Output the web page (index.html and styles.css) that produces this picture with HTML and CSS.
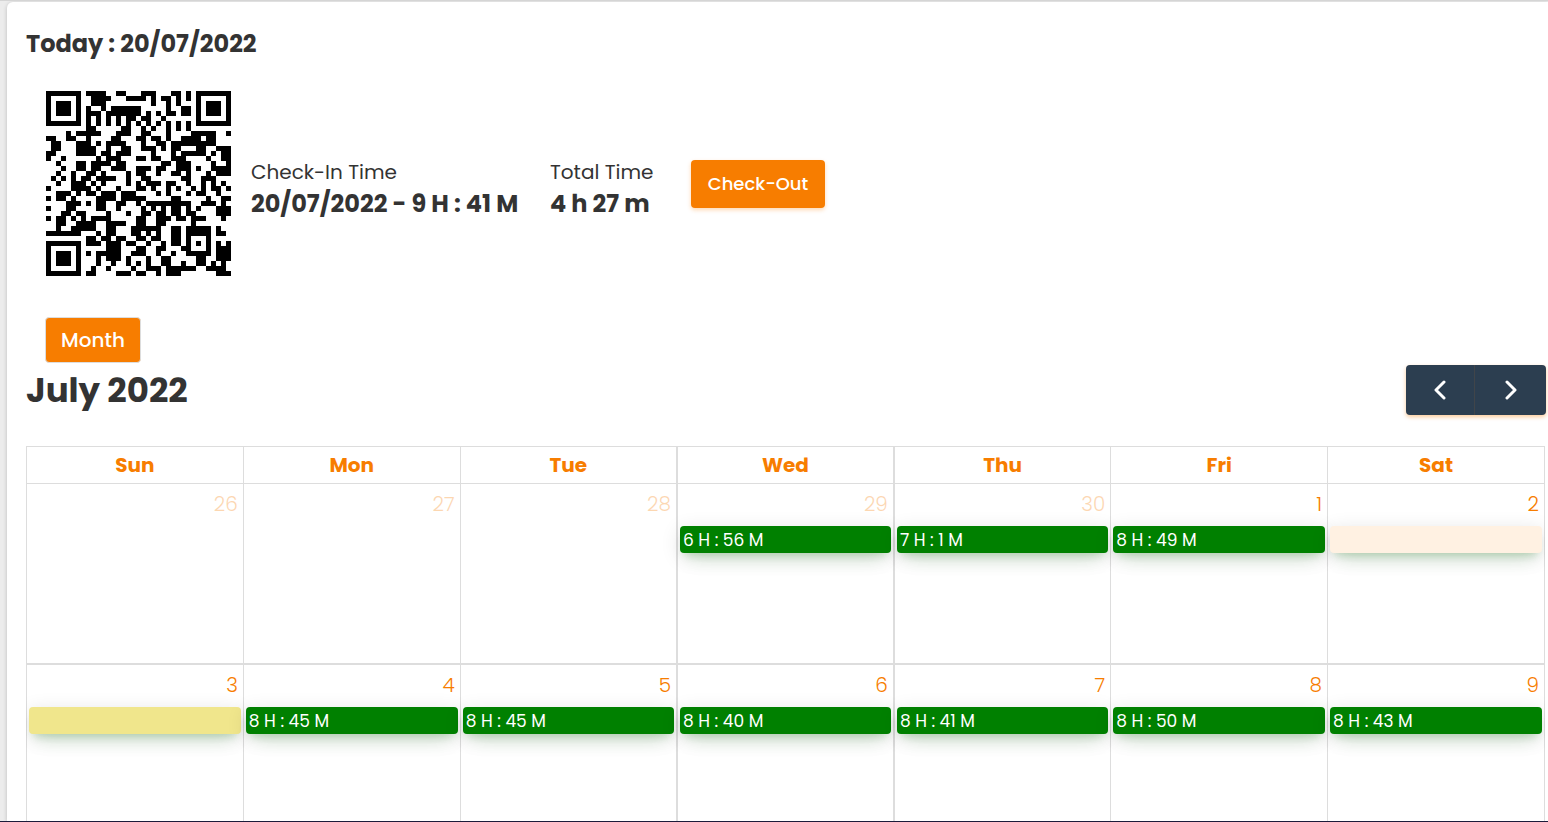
FILE: index.html
```html
<!DOCTYPE html>
<html lang="en">

<head>
    <meta charset="UTF-8">
    <meta name="viewport" content="width=device-width, initial-scale=1.0">
    <title>Attendance</title>
    <link rel="stylesheet" href="styles.css">
</head>

<body>
    <main class="card">
        <h2 class="today">Today : 20/07/2022</h2>

        <section class="attendance">
            <svg class="qr" viewBox="0 0 37 37" role="img" aria-label="QR code" shape-rendering="crispEdges">
                <path d=""></path>
            </svg>
            <div class="info">
                <span>Check-In Time</span>
                <strong>20/07/2022 - 9 H : 41 M</strong>
            </div>
            <div class="info">
                <span>Total Time</span>
                <strong>4 h 27 m</strong>
            </div>
            <button type="button" class="btn btn-checkout">Check-Out</button>
        </section>

        <button type="button" class="btn btn-month">Month</button>

        <div class="toolbar">
            <h1>July 2022</h1>
            <div class="nav">
                <button type="button" class="prev" aria-label="Previous month">
                    <svg viewBox="0 0 20 20"><path d="M14 2 6 10l8 8"></path></svg>
                </button>
                <button type="button" class="next" aria-label="Next month">
                    <svg viewBox="0 0 20 20"><path d="m6 2 8 8-8 8"></path></svg>
                </button>
            </div>
        </div>

        <div class="calendar">
            <table>
                <thead>
                    <tr>
                        <th>Sun</th>
                        <th>Mon</th>
                        <th>Tue</th>
                        <th>Wed</th>
                        <th>Thu</th>
                        <th>Fri</th>
                        <th>Sat</th>
                    </tr>
                </thead>
                <tbody>
                    <tr>
                        <td class="other"><span class="day">26</span></td>
                        <td class="other"><span class="day">27</span></td>
                        <td class="other"><span class="day">28</span></td>
                        <td class="other"><span class="day">29</span><div class="event">6 H : 56 M</div></td>
                        <td class="other"><span class="day">30</span><div class="event">7 H : 1 M</div></td>
                        <td><span class="day">1</span><div class="event">8 H : 49 M</div></td>
                        <td><span class="day">2</span><div class="event weekend"></div></td>
                    </tr>
                    <tr>
                        <td><span class="day">3</span><div class="event holiday"></div></td>
                        <td><span class="day">4</span><div class="event">8 H : 45 M</div></td>
                        <td><span class="day">5</span><div class="event">8 H : 45 M</div></td>
                        <td><span class="day">6</span><div class="event">8 H : 40 M</div></td>
                        <td><span class="day">7</span><div class="event">8 H : 41 M</div></td>
                        <td><span class="day">8</span><div class="event">8 H : 50 M</div></td>
                        <td><span class="day">9</span><div class="event">8 H : 43 M</div></td>
                    </tr>
                </tbody>
            </table>
        </div>
    </main>

    <script src="qr.js"></script>
</body>

</html>
```
FILE: styles.css
```css
* {
    box-sizing: border-box;
}

body {
    margin: 0;
    height: 100vh;
    padding: 1px 0 0 7px;
    border-top: 1px solid #d5d5d5;
    border-bottom: 1px solid #1b1b3a;
    background: #ececec;
    color: #333;
    font-family: Poppins, Inter, sans-serif;
    overflow: hidden;
}

h1,
h2 {
    margin: 0;
    font-weight: 700;
}

button {
    border: 0;
    font-family: inherit;
    color: #fff;
    cursor: pointer;
}

.card {
    display: flex;
    flex-direction: column;
    align-items: stretch;
    height: 100%;
    padding: 26px 2px 0 19px;
    border-radius: 6px 0 0 0;
    background: #fff;
    box-shadow: 0 1px 4px rgba(0, 0, 0, .2);
    overflow: hidden;
}

.today {
    font-size: 24px;
    line-height: 32px;
}

.attendance {
    display: grid;
    grid-template-columns: 185px 279px 121px auto;
    justify-content: start;
    align-items: center;
    column-gap: 20px;
    margin-top: 31px;
    padding-left: 20px;
}

.qr {
    display: block;
    width: 185px;
    height: 185px;
}

.info {
    padding-top: 8px;
}

.info span,
.info strong {
    display: block;
    line-height: 32px;
    white-space: nowrap;
}

.info span {
    font-size: 20px;
}

.info strong {
    font-size: 24px;
    font-weight: 700;
}

.btn {
    border-radius: 4px;
    background: #f77d00;
    font-weight: 500;
}

.btn-checkout {
    width: 134px;
    height: 48px;
    font-size: 18px;
    box-shadow: 0 2px 4px rgba(247, 125, 0, .3);
}

.btn-month {
    align-self: flex-start;
    flex: none;
    width: 96px;
    height: 46px;
    margin: 41px 0 2px 19px;
    padding: 0;
    border: 1px solid #ddd;
    font-size: 20px;
}

.toolbar {
    display: flex;
    justify-content: space-between;
    align-items: center;
    height: 50px;
    margin-bottom: 31px;
    flex: none;
}

.toolbar h1 {
    font-size: 34px;
    line-height: 50px;
}

.nav {
    display: flex;
    border-radius: 4px;
    background: #2c3e50;
    box-shadow: 0 2px 4px rgba(247, 125, 0, .4);
}

.nav button {
    display: flex;
    align-items: center;
    justify-content: center;
    height: 50px;
    padding: 0;
    background: none;
}

.nav .prev {
    width: 68px;
}

.nav .next {
    width: 72px;
    border-left: 1px solid #40454a;
}

.nav svg {
    width: 20px;
    height: 20px;
    fill: none;
    stroke: #fff;
    stroke-width: 3;
    stroke-linecap: round;
    stroke-linejoin: round;
}

/* calendar */
.calendar {
    flex: 1;
    min-height: 0;
    margin-right: 1px;
    overflow: hidden;
}

table {
    width: 100%;
    table-layout: fixed;
    border-collapse: collapse;
}

th,
td {
    border: 1px solid #ddd;
}

th {
    height: 37px;
    padding: 0;
    color: #f77d00;
    font-size: 20px;
    line-height: 24px;
}

td {
    height: 180px;
    padding: 0 2px;
    vertical-align: top;
    color: #f77d00;
}

tbody tr + tr td {
    border-top-width: 2px;
}

th:nth-child(4),
th:nth-child(5),
td:nth-child(4),
td:nth-child(5) {
    border-left-width: 2px;
}

.day {
    display: block;
    height: 42px;
    padding-right: 3px;
    font-size: 20px;
    font-weight: 300;
    line-height: 40px;
    text-align: right;
}

.other .day {
    opacity: .3;
}

.event {
    position: relative;
    height: 27px;
    padding-left: 3px;
    border-radius: 4px;
    background: green;
    box-shadow: 0 12px 20px -10px rgba(0, 128, 0, .28), 0 4px 20px 0 rgba(0, 0, 0, .12), 0 7px 8px -5px rgba(0, 128, 0, .2);
    color: #fff;
    font-size: 17px;
    line-height: 28px;
}

.event.weekend {
    background: #fff1e2;
}

.event.holiday {
    background: khaki;
}
```
FILE: qr.js
```js
// one string per row, # is a dark module
const rows = [
    '#######.####..##...###...##.#.#######',
    '#.....#..####...####.#.##.#.#.#.....#',
    '#.###.#..###.........#..#.#...#.###.#',
    '#.###.#.#..#.######.....#..##.#.###.#',
    '#.###.#.###.#######.#.#.##.##.#.###.#',
    '#.....#.#.#.#.#.##.##..#......#.....#',
    '#######.#.#.#.#.#.#.#.#.#.#.#.#######',
    '........##.....##..#.#..#.#.#........',
    '....#.#####...###..##...#....#####..#',
    '##..##..#....##...##.##.#..####.##...',
    '.##...###.#.####...#..##.#########...',
    '.##...####..#..##..###.#.##...##..###',
    '##....####.##.###....#...#.#####.#.##',
    '#..#......#.###...##.##..###....#..##',
    '..#...##.####.##.......##.###....#..#',
    '...#..##.##..###..###.##..###.#..####',
    '..#..#..##.#....#.##..#..##.#...#.###',
    '.#.#.#.##.####..#..##......##..###...',
    '..#..###.#.#....#.#.###.##..#..#.#.#.',
    '#....####.#...#...##.#..#.#..#.#.##.#',
    '..###.#.##.###.###....#.#...#.##..#..',
    '#.##.#....####.#####.....##.....#..##',
    '....###.#.##..##..#.#########..###.#.',
    '#...##....##..#....#.#.#.##.#.#...###',
    '...##.##....#...#..##.##.##.##....###',
    '#.##.#.#.####.....##..###.##.###...#.',
    '..##..####..####..##..##.....#.......',
    '..#..#####..##...######..##.#####.#..',
    '#######...#.##...##.#.#..##.#####.##.',
    '........##.##.##..##.##..##.#...#....',
    '#######.###.###.##..#..#.##.#.#.#.#.#',
    '#.....#.....###...##..##...##...#.###',
    '#.###.#.#.#####..###..#..#..#####.###',
    '#.###.#...#.###.#...#..##.....##..###',
    '#.###.#...#..#..#.#.#..##..#..##.#.#.',
    '#.....#..#..#....#..###.######..####.',
    '#######.##....###.##..#.###.......###'
]

let d = ''
rows.forEach((row, y) => {
    Array.from(row).forEach((cell, x) => {
        if (cell === '#') d += `M${x} ${y}h1v1h-1z`
    })
})

document.querySelector('.qr path').setAttribute('d', d)
```
